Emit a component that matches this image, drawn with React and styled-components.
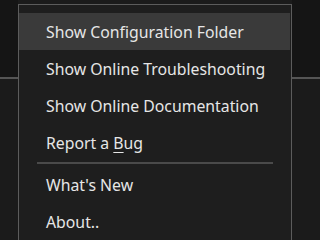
import React from "react";
import styled, { createGlobalStyle } from "styled-components";

const Global = createGlobalStyle`
  html, body { margin: 0; padding: 0; background: #161616; }
  body { width: 320px; height: 240px; overflow: hidden; font-family: "Noto Sans", "Open Sans", sans-serif; }
`;

const Stage = styled.div`
  position: relative;
  width: 320px;
  height: 240px;
  display: grid;
  grid-template-columns: 18px 1fr 28px;
  grid-template-rows: 79px 1fr;
  background: #161616;
`;

const Pane = styled.div`
  background: ${(p) => p.$bg || "#1b1b1b"};
  border-bottom: ${(p) => (p.$line ? "2px solid #555" : "none")};
  box-sizing: border-box;
`;

const Menu = styled.div`
  position: absolute;
  left: 18px;
  top: 4px;
  width: 274px;
  height: 236px;
  overflow: hidden;
  box-sizing: border-box;
  background: #1e1e1e;
  border: 1px solid #5c5c5c;
  border-bottom: none;
  padding-top: 8px;
  display: flex;
  flex-direction: column;
`;

const Item = styled.div`
  height: 37px;
  flex: none;
  display: flex;
  align-items: center;
  padding-left: 27px;
  margin: 0 1px 0 0;
  font-size: 15.8px;
  color: #e6e6e6;
  background: ${(p) => (p.$active ? "#3a3a3a" : "transparent")};
  white-space: pre;
`;

const Separator = styled.div`
  height: 2px;
  margin: 1px 18px 2px 18px;
  background: #4a4a4a;
  flex: none;
`;

const Mn = styled.span`
  text-decoration: underline;
  text-underline-offset: 3px;
`;

export default function App() {
  return (
    <>
      <Global />
      <Stage>
        <Pane $bg="#151515" $line />
        <Pane $bg="#1b1b1b" />
        <Pane $bg="#151515" $line />
        <Pane $bg="#1b1b1b" />
        <Pane $bg="#1b1b1b" />
        <Pane $bg="#1b1b1b" />
        <Menu>
          <Item $active>Show Configuration Folder</Item>
          <Item>Show Online Troubleshooting</Item>
          <Item>Show Online Documentation</Item>
          <Item>
            {"Report a "}
            <Mn>B</Mn>
            {"ug"}
          </Item>
          <Separator />
          <Item>What's New</Item>
          <Item>About..</Item>
        </Menu>
      </Stage>
    </>
  );
}
